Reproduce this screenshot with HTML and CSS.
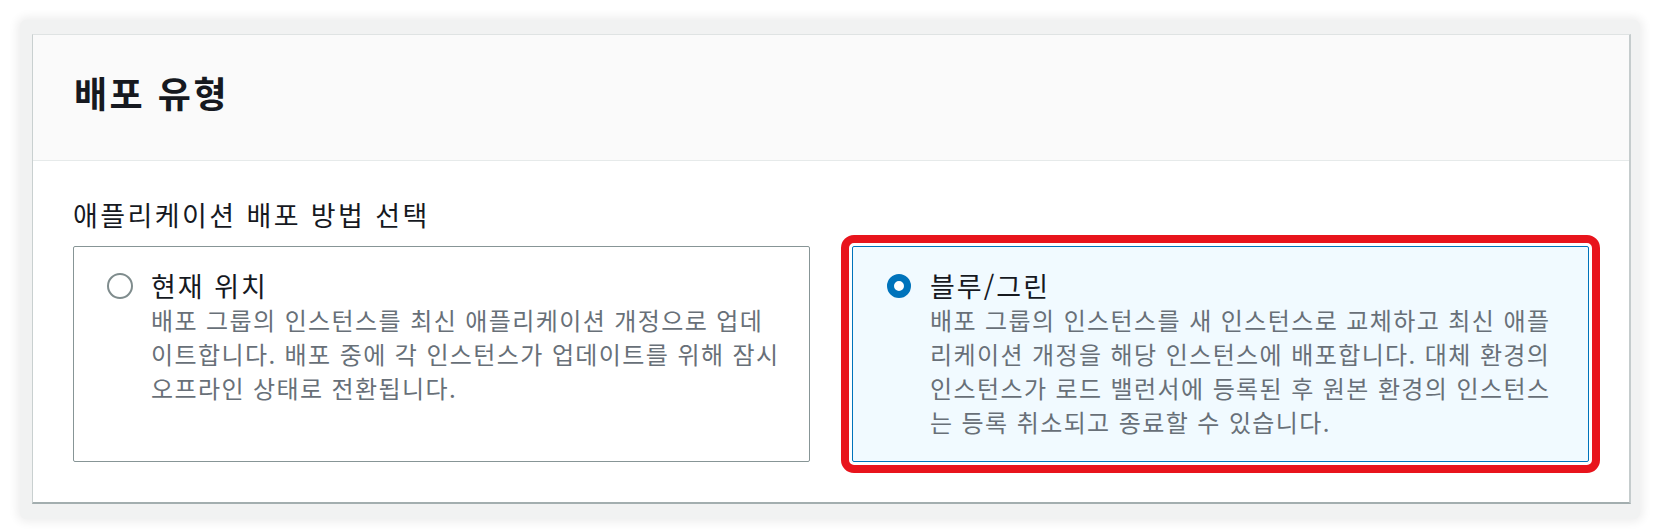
FILE: index.html
```html
<!DOCTYPE html>
<html lang="ko">
<head>
<meta charset="utf-8">
<title>배포 유형</title>
<link rel="stylesheet" href="styles.css">
</head>
<body>
<div class="frame">
  <section class="panel">
    <header class="panel-header">
      <h2 class="panel-title">배포 유형</h2>
    </header>
    <div class="panel-body">
      <div class="field-label">애플리케이션 배포 방법 선택</div>
      <div class="tiles">
        <label class="tile">
          <span class="radio-box"><span class="radio"></span></span>
          <span class="tile-text">
            <span class="tile-title">현재 위치</span>
            <span class="tile-desc">배포 그룹의 인스턴스를 최신 애플리케이션 개정으로 업데<br>이트합니다. 배포 중에 각 인스턴스가 업데이트를 위해 잠시<br>오프라인 상태로 전환됩니다.</span>
          </span>
        </label>
        <label class="tile tile-selected">
          <span class="radio-box"><span class="radio radio-checked"></span></span>
          <span class="tile-text">
            <span class="tile-title">블루/그린</span>
            <span class="tile-desc">배포 그룹의 인스턴스를 새 인스턴스로 교체하고 최신 애플<br>리케이션 개정을 해당 인스턴스에 배포합니다. 대체 환경의<br>인스턴스가 로드 밸런서에 등록된 후 원본 환경의 인스턴스<br>는 등록 취소되고 종료할 수 있습니다.</span>
          </span>
        </label>
      </div>
    </div>
  </section>
</div>
</body>
</html>
```

FILE: styles.css
```css
html, body {
  margin: 0;
  padding: 0;
  background: #ffffff;
}

body {
  font-family: "Noto Sans CJK KR", "Noto Sans", sans-serif;
  color: #16191f;
}

.frame {
  margin: 20px 20px 14px 20px;
  padding: 14px 9px 15px 12px;
  background: #f1f2f2;
  border-radius: 6px;
  box-shadow: 0 0 10px 3px rgba(0, 0, 0, 0.07);
}

.panel {
  background: #ffffff;
  border: 1px solid #dfe3e3;
  border-left-color: #c9d0d0;
  border-right: 2px solid #c5cccd;
  border-bottom: 2px solid #a3aeaf;
}

.panel-header {
  height: 126px;
  box-sizing: border-box;
  background: #fafafa;
  border-bottom: 1px solid #e6eaea;
  padding: 33px 40px 0 41px;
}

.panel-title {
  margin: 0;
  font-size: 36px;
  line-height: 48px;
  font-weight: 700;
  letter-spacing: 2.5px;
  color: #16191f;
}

.panel-body {
  padding: 37px 40px 40px 40px;
}

.field-label {
  font-size: 27px;
  line-height: 34px;
  letter-spacing: 2.4px;
  color: #16191f;
  margin-bottom: 14px;
}

.tiles {
  display: grid;
  grid-template-columns: 1fr 1fr;
  gap: 42px;
}

.tile {
  display: flex;
  align-items: flex-start;
  gap: 18px;
  border: 1px solid #879596;
  border-radius: 2px;
  padding: 22px 20px 22px 33px;
  background: #ffffff;
}

.tile-selected {
  border-color: #0073bb;
  background: #f1faff;
  outline: 8px solid #e8141c;
  outline-offset: 3px;
}

.radio-box {
  flex: none;
  width: 26px;
  height: 34px;
  display: flex;
  align-items: center;
  justify-content: center;
}

.radio {
  width: 26px;
  height: 26px;
  box-sizing: border-box;
  border: 2px solid #7f8c8d;
  border-radius: 50%;
  background: #ffffff;
}

.radio-checked {
  border: 7px solid #0073bb;
  width: 24px;
  height: 24px;
}

.tile-text {
  display: flex;
  flex-direction: column;
}

.tile-title {
  font-size: 27px;
  line-height: 34px;
  letter-spacing: 2px;
  color: #16191f;
  white-space: nowrap;
}

.tile-desc {
  font-size: 24px;
  line-height: 34px;
  letter-spacing: 1.4px;
  color: #687078;
  white-space: nowrap;
}
```
